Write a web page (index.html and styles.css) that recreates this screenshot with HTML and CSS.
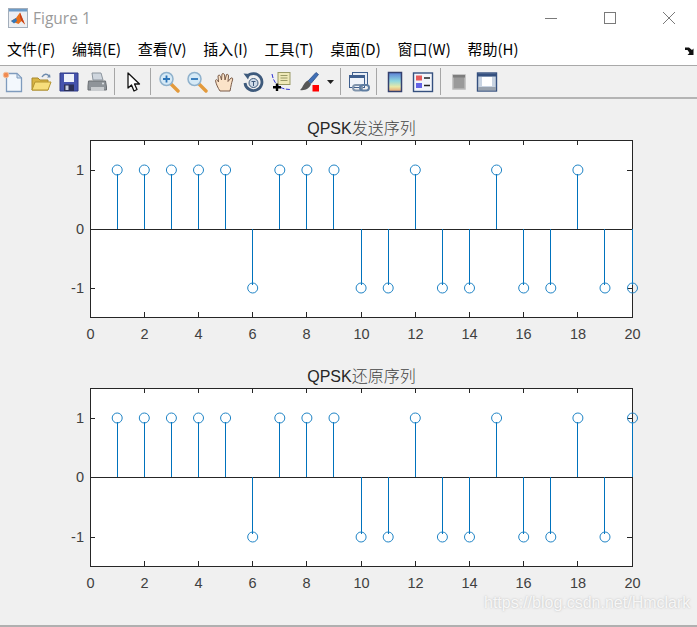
FILE: index.html
```html
<!DOCTYPE html>
<html lang="zh">
<head>
<meta charset="utf-8">
<title>Figure 1</title>
<link rel="stylesheet" href="styles.css">
</head>
<body>
<div class="window">
  <header class="titlebar">
    <svg class="app-icon" viewBox="0 0 20 20" width="20" height="20">
      <rect x="0.5" y="0.5" width="19" height="19" fill="#eceff3" stroke="#a3aebb"/>
      <rect x="1" y="1" width="18" height="2.500" fill="#6d9cc8"/>
      <path d="M3 13 L8 10 L12 4.500 L17 16.500 L13.500 13 L10.500 16 Z" fill="#e8701c"/>
      <path d="M3 13 L8 10 L9 13 L6 15.500 Z" fill="#3478b8"/>
      <path d="M12 4.500 L17 16.500 L13.500 13 L12 9 Z" fill="#c8401a"/>
    </svg>
    <span class="app-title">Figure 1</span>
    <div class="win-controls">
      <svg width="14" height="14" viewBox="0 0 14 14"><path d="M1 7.500H13" class="win-stroke"/></svg>
      <svg width="14" height="14" viewBox="0 0 14 14"><rect x="1.500" y="1.500" width="11" height="11" class="win-stroke"/></svg>
      <svg width="14" height="14" viewBox="0 0 14 14"><path d="M1 1L13 13M13 1L1 13" class="win-stroke"/></svg>
    </div>
  </header>

  <nav class="menubar">
    <span>文件(F)</span><span>编辑(E)</span><span>查看(V)</span><span>插入(I)</span><span>工具(T)</span><span>桌面(D)</span><span>窗口(W)</span><span>帮助(H)</span>
    <svg class="dock" width="9" height="8" viewBox="0 0 9 8"><path d="M0 0.500H4L7 3L8.500 1.500V8H2.500L4.500 6L2.500 3H0Z" fill="#111"/></svg>
  </nav>

  <div class="toolbar">
    <span class="tool first"><svg viewBox="0 0 22 22" width="22" height="22"><path d="M4.500 2.500H15L19.500 7V20.500H4.500Z" fill="#f3f8fd" stroke="#7f9bbd" stroke-width="1.300"/><path d="M15 2.500V7H19.500Z" fill="#cfe0f0" stroke="#7f9bbd"/><circle cx="4" cy="4" r="2.800" fill="#f08a50" stroke="#f6c09a"/></svg></span>
    <span class="tool"><svg viewBox="0 0 22 22" width="22" height="22"><path d="M2 19V7H8L10 9H18V19Z" fill="#d9b443" stroke="#a8892e"/><path d="M2 19L5 11H21L18 19Z" fill="#f7de7c" stroke="#b4942f"/><path d="M12 6C14 2.500 17 2.500 19 5" fill="none" stroke="#6f8cae" stroke-width="1.500"/><path d="M17 6.500L20.500 6.500L20 3Z" fill="#6f8cae"/></svg></span>
    <span class="tool"><svg viewBox="0 0 22 22" width="22" height="22"><path d="M2 2H20V20H2Z" fill="#4553ad" stroke="#2e3a86"/><rect x="6" y="3" width="10" height="8" fill="#eef2fa"/><rect x="6" y="13.500" width="10" height="6.500" fill="#2b2f55"/><rect x="7.500" y="14.500" width="3" height="4.500" fill="#c9cfe0"/></svg></span>
    <span class="tool"><svg viewBox="0 0 22 22" width="22" height="22"><path d="M6 2H15L17 9H7Z" fill="#cfd6de" stroke="#8c959e"/><path d="M2.500 10H19.500L20.500 16V19H2V15Z" fill="#8f9499" stroke="#6a6e73"/><path d="M5 16H18V20H5Z" fill="#c9cccf"/><circle cx="17" cy="12.500" r="1" fill="#dfe3e6"/></svg></span>
    <i class="sep"></i>
    <span class="tool cursor"><svg viewBox="0 0 22 22" width="22" height="22"><path d="M5 2V17L8.500 14L11 20L14 18.500L11.500 13H16.500Z" fill="#fff" stroke="#111" stroke-width="1.300" stroke-linejoin="round"/></svg></span>
    <i class="sep"></i>
    <span class="tool"><svg viewBox="0 0 22 22" width="22" height="22"><path d="M13.500 13.500L20 20" stroke="#e39a3c" stroke-width="3.400" stroke-linecap="round"/><circle cx="8.500" cy="8" r="6.500" fill="#d5e9f6" stroke="#8fb1cc" stroke-width="1.500"/><path d="M5 8H12M8.500 4.500V11.500" stroke="#2c74b8" stroke-width="1.800"/></svg></span>
    <span class="tool"><svg viewBox="0 0 22 22" width="22" height="22"><path d="M13.500 13.500L20 20" stroke="#e39a3c" stroke-width="3.400" stroke-linecap="round"/><circle cx="8.500" cy="8" r="6.500" fill="#d5e9f6" stroke="#8fb1cc" stroke-width="1.500"/><path d="M5 8H12" stroke="#2c74b8" stroke-width="1.800"/></svg></span>
    <span class="tool"><svg viewBox="0 0 22 22" width="22" height="22"><path d="M6 20C4 17 2 13 1.500 9.500C2 8 3.500 8.500 4.500 11L4 5C4.500 3.500 6 4 6.500 5.500L7.500 9L8 3C9 2 10 2.500 10.500 4L11 9L12.500 3.500C13.500 3 14.500 3.500 14.500 5L14 10.500L17 7C18.500 6.500 19 7.500 18.500 9C17.500 12 17 15 16 20Z" fill="#fbe3c8" stroke="#7a5b48" stroke-linejoin="round"/></svg></span>
    <span class="tool"><svg viewBox="0 0 22 22" width="22" height="22"><path d="M5 5.500A8.500 8.500 0 1 1 3 12" fill="none" stroke="#3e5a7c" stroke-width="2.800"/><path d="M1.500 2.500L8 3L6 8.500Z" fill="#3e5a7c"/><circle cx="11.500" cy="12" r="4.500" fill="#cfdbe8" stroke="#3e5a7c"/><path d="M9.500 10.500H13.500M11.500 10.500V15" stroke="#3e5a7c"/></svg></span>
    <span class="tool"><svg viewBox="0 0 22 22" width="22" height="22"><path d="M2 3C3 9 6 14 10 16C13 18 17 18.500 21 18.500" fill="none" stroke="#2b2fd0" stroke-dasharray="4 1.500"/><rect x="8" y="1.500" width="12" height="12" fill="#efe9b8" stroke="#9a9a66"/><path d="M10.500 4.500H17.500M10.500 7H17.500M10.500 9.500H17.500" stroke="#9a9a66"/><path d="M7 12.500V20M3 16.200H11" stroke="#000" stroke-width="2.400"/></svg></span>
    <span class="tool"><svg viewBox="0 0 22 22" width="22" height="22"><path d="M10 10L18 1.500L20.500 3.500L13 12.500Z" fill="#3f6fb5" stroke="#2e4f88" stroke-width="0.800"/><path d="M9.500 9.500L13 13C12 17 7 20 2 19C4.500 17.500 5 12.500 9.500 9.500Z" fill="#575757"/><rect x="14.500" y="14" width="6.500" height="6.500" fill="#f00"/></svg></span>
    <span class="tool-arrow"><svg width="7" height="4" viewBox="0 0 7 4"><path d="M0 0H7L3.500 4Z" fill="#222"/></svg></span>
    <i class="sep"></i>
    <span class="tool"><svg viewBox="0 0 22 22" width="22" height="22"><rect x="4.500" y="1.500" width="15" height="12" fill="#e8eef6" stroke="#3e5f8e"/><rect x="1.500" y="4.500" width="15" height="12" fill="#f0f4fa" stroke="#3e5f8e"/><rect x="1.500" y="4.500" width="15" height="2.500" fill="#3e5f8e"/><rect x="5" y="14" width="9" height="5.500" rx="2.700" fill="none" stroke="#8195ad" stroke-width="2"/><rect x="12" y="14" width="9" height="5.500" rx="2.700" fill="none" stroke="#5e7da1" stroke-width="2"/></svg></span>
    <i class="sep"></i>
    <span class="tool"><svg viewBox="0 0 22 22" width="22" height="22"><defs><linearGradient id="cbar" x1="0" y1="0" x2="0" y2="1"><stop offset="0" stop-color="#5b7fd6"/><stop offset="0.450" stop-color="#8fd8e0"/><stop offset="0.750" stop-color="#e9e9a8"/><stop offset="1" stop-color="#e9a070"/></linearGradient></defs><rect x="4.500" y="1.500" width="13" height="19" fill="url(#cbar)" stroke="#34406e" stroke-width="1.500"/></svg></span>
    <span class="tool"><svg viewBox="0 0 22 22" width="22" height="22"><rect x="1.500" y="2" width="19" height="18.500" fill="#f3f5fa" stroke="#35507f" stroke-width="1.400"/><rect x="4" y="4.500" width="6" height="5" fill="#e65b5b"/><rect x="4" y="12" width="6" height="5" fill="#6464e6"/><path d="M12 7H18M12 14.500H18" stroke="#222" stroke-width="1.400"/></svg></span>
    <i class="sep"></i>
    <span class="tool"><svg viewBox="0 0 22 22" width="22" height="22"><rect x="5" y="4" width="12" height="14" fill="#9a9a9a" stroke="#b8b8b8" stroke-width="1.500"/><rect x="5" y="4" width="12" height="2.500" fill="#7d7d7d"/></svg></span>
    <span class="tool"><svg viewBox="0 0 22 22" width="22" height="22"><rect x="1.500" y="2" width="19" height="18" fill="#c9d4e2" stroke="#35507f" stroke-width="1.400"/><rect x="2" y="2.500" width="18" height="3" fill="#35507f"/><rect x="6" y="6" width="10" height="9" fill="#fff"/><rect x="2" y="16" width="18" height="3.500" fill="#9aa3ae"/></svg></span>
  </div>

  <main class="figure">
    <div class="axes">
      <svg class="plot" viewBox="0 120 697 230" width="697" height="230">
        <text class="plot-title" x="361.500" y="134">QPSK<tspan class="cjk">发送序列</tspan></text>
        <rect class="box" x="90.500" y="140.500" width="542" height="177"/>
        <path class="axis" d="M90 229.500H632M144.500 140V145M198.500 140V145M252.500 140V145M306.500 140V145M361.500 140V145M415.500 140V145M469.500 140V145M523.500 140V145M577.500 140V145M144.500 317V312M198.500 317V312M252.500 317V312M306.500 317V312M361.500 317V312M415.500 317V312M469.500 317V312M523.500 317V312M577.500 317V312M90 170.500H95M90 288.500H95M632 170.500H627M632 288.500H627"/>
        <path class="stem" d="M117.500 229V174M144.500 229V174M171.500 229V174M198.500 229V174M225.500 229V174M252.500 229V285M279.500 229V174M306.500 229V174M333.500 229V174M361.500 229V285M388.500 229V285M415.500 229V174M442.500 229V285M469.500 229V285M496.500 229V174M523.500 229V285M550.500 229V285M577.500 229V174M604.500 229V285M632.500 229V285"/>
        <g class="marks">
          <circle cx="117.200" cy="170" r="5"/><circle cx="144.300" cy="170" r="5"/><circle cx="171.400" cy="170" r="5"/><circle cx="198.500" cy="170" r="5"/><circle cx="225.600" cy="170" r="5"/><circle cx="252.700" cy="288" r="5"/><circle cx="279.800" cy="170" r="5"/><circle cx="306.900" cy="170" r="5"/><circle cx="334" cy="170" r="5"/><circle cx="361.100" cy="288" r="5"/><circle cx="388.200" cy="288" r="5"/><circle cx="415.300" cy="170" r="5"/><circle cx="442.400" cy="288" r="5"/><circle cx="469.500" cy="288" r="5"/><circle cx="496.600" cy="170" r="5"/><circle cx="523.700" cy="288" r="5"/><circle cx="550.800" cy="288" r="5"/><circle cx="577.900" cy="170" r="5"/><circle cx="605" cy="288" r="5"/><circle cx="632.500" cy="288" r="5"/>
        </g>
        <g class="ticks-y"><text x="84" y="175">1</text><text x="84" y="234">0</text><text x="84" y="293">-1</text></g>
        <g class="ticks-x"><text x="90.500" y="339">0</text><text x="144.500" y="339">2</text><text x="198.500" y="339">4</text><text x="252.500" y="339">6</text><text x="306.500" y="339">8</text><text x="361.500" y="339">10</text><text x="415.500" y="339">12</text><text x="469.500" y="339">14</text><text x="523.500" y="339">16</text><text x="578" y="339">18</text><text x="632.500" y="339">20</text></g>
      </svg>
    </div>
    <div class="axes">
      <svg class="plot" viewBox="0 368 697 230" width="697" height="230">
        <text class="plot-title" x="361.500" y="382">QPSK<tspan class="cjk">还原序列</tspan></text>
        <rect class="box" x="90.500" y="388.500" width="542" height="178"/>
        <path class="axis" d="M90 477.500H632M144.500 388V393M198.500 388V393M252.500 388V393M306.500 388V393M361.500 388V393M415.500 388V393M469.500 388V393M523.500 388V393M577.500 388V393M144.500 566V561M198.500 566V561M252.500 566V561M306.500 566V561M361.500 566V561M415.500 566V561M469.500 566V561M523.500 566V561M577.500 566V561M90 418.500H95M90 537.500H95M632 418.500H627M632 537.500H627"/>
        <path class="stem" d="M117.500 477V422M144.500 477V422M171.500 477V422M198.500 477V422M225.500 477V422M252.500 477V534M279.500 477V422M306.500 477V422M333.500 477V422M361.500 477V534M388.500 477V534M415.500 477V422M442.500 477V534M469.500 477V534M496.500 477V422M523.500 477V534M550.500 477V534M577.500 477V422M604.500 477V534M632.500 477V422"/>
        <g class="marks">
          <circle cx="117.200" cy="418" r="5"/><circle cx="144.300" cy="418" r="5"/><circle cx="171.400" cy="418" r="5"/><circle cx="198.500" cy="418" r="5"/><circle cx="225.600" cy="418" r="5"/><circle cx="252.700" cy="537" r="5"/><circle cx="279.800" cy="418" r="5"/><circle cx="306.900" cy="418" r="5"/><circle cx="334" cy="418" r="5"/><circle cx="361.100" cy="537" r="5"/><circle cx="388.200" cy="537" r="5"/><circle cx="415.300" cy="418" r="5"/><circle cx="442.400" cy="537" r="5"/><circle cx="469.500" cy="537" r="5"/><circle cx="496.600" cy="418" r="5"/><circle cx="523.700" cy="537" r="5"/><circle cx="550.800" cy="537" r="5"/><circle cx="577.900" cy="418" r="5"/><circle cx="605" cy="537" r="5"/><circle cx="632.500" cy="418" r="5"/>
        </g>
        <g class="ticks-y"><text x="84" y="423">1</text><text x="84" y="482">0</text><text x="84" y="542">-1</text></g>
        <g class="ticks-x"><text x="90.500" y="588">0</text><text x="144.500" y="588">2</text><text x="198.500" y="588">4</text><text x="252.500" y="588">6</text><text x="306.500" y="588">8</text><text x="361.500" y="588">10</text><text x="415.500" y="588">12</text><text x="469.500" y="588">14</text><text x="523.500" y="588">16</text><text x="578" y="588">18</text><text x="632.500" y="588">20</text></g>
      </svg>
    </div>
    <span class="watermark">https://blog.csdn.net/Hmclark</span>
  </main>
</div>
</body>
</html>
```
FILE: styles.css
```css
* { box-sizing: border-box; }
html, body { margin: 0; padding: 0; }
body { width: 697px; height: 627px; overflow: hidden; background: #fff; }

.window { display: flex; flex-direction: column; width: 697px; height: 627px; background: #f0f0f0; }

.titlebar { display: flex; align-items: center; height: 33px; padding: 2px 0 0 8px; background: #fff; flex: none; }
.app-icon { flex: none; }
.app-title { margin-left: 5px; font: 15.500px "Open Sans", "Liberation Sans", sans-serif; color: #9a9a9a; }
.win-controls { display: flex; gap: 45px; margin-left: auto; margin-right: 21px; align-items: center; }
.win-stroke { fill: none; stroke: #7a7a7a; stroke-width: 1; }

.menubar { position: relative; display: flex; align-items: center; gap: 16.700px; height: 33px; padding: 0 0 2px 7px; background: #fff; border-bottom: 1px solid #a9a9a9; font: 15px "Noto Sans CJK SC", "Noto Sans", sans-serif; color: #000; flex: none; white-space: nowrap; }
.dock { position: absolute; left: 685px; top: 14px; }

.toolbar { display: flex; align-items: center; height: 33px; background: #f0f0f0; border-bottom: 2px solid #b4b4b4; flex: none; }
.tool { display: flex; align-items: center; justify-content: center; width: 28px; height: 24px; flex: none; }
.tool.first { margin-left: -1px; }
.tool.cursor { width: 26px; margin-left: 2px; }
.tool-arrow { display: flex; align-items: center; justify-content: center; width: 14px; height: 24px; flex: none; }
.sep { display: block; width: 1px; height: 27px; margin: 0 4px 0 3px; background: #a6a6a6; flex: none; }

.figure { position: relative; flex: 1; padding-top: 21px; display: flex; flex-direction: column; gap: 18px; border-bottom: 2px solid #b0b0b0; }
.axes { height: 230px; flex: none; }
.plot { display: block; overflow: visible; }

.box { fill: #fff; stroke: #262626; stroke-width: 1; }
.axis { fill: none; stroke: #262626; stroke-width: 1; }
.stem { fill: none; stroke: #0072bd; stroke-width: 1; }
.marks circle { fill: none; stroke: #1f84c6; stroke-width: 1; }

.plot-title { font: 16px "Liberation Sans", "Noto Sans CJK SC", sans-serif; fill: #262626; text-anchor: middle; }
.plot-title .cjk { font: 300 16px "Noto Sans CJK SC", sans-serif; fill: #444; }
.ticks-x text, .ticks-y text { font: 14.500px "Liberation Sans", sans-serif; fill: #404040; }
.ticks-x text { text-anchor: middle; }
.ticks-y text { text-anchor: end; }

.watermark { position: absolute; left: 484px; top: 495px; font: 16px "Liberation Sans", sans-serif; color: rgba(255, 255, 255, 0.85); text-shadow: 0 0 2px rgba(130, 130, 130, 0.5); white-space: nowrap; }
```
